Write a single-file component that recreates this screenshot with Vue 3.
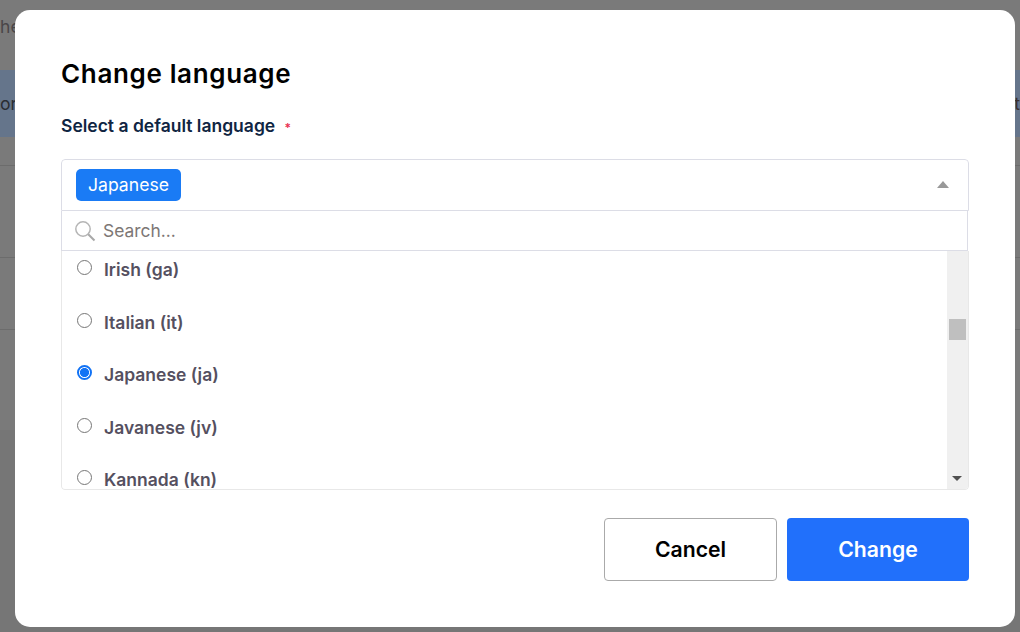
<script setup>
const options = [
  { label: 'Irish (ga)', checked: false },
  { label: 'Italian (it)', checked: false },
  { label: 'Japanese (ja)', checked: true },
  { label: 'Javanese (jv)', checked: false },
  { label: 'Kannada (kn)', checked: false },
]
</script>

<template>
  <div class="page">
    <div class="back">
      <div class="b-top"><span>he</span></div>
      <div class="b-band"><span>or</span><span class="b-end">t</span></div>
      <div class="b-gap"></div>
      <div class="b-row r1"></div>
      <div class="b-row r2"></div>
      <div class="b-row r3"></div>
    </div>
    <div class="modal">
      <h2 class="title">Change language</h2>
      <div class="label">Select a default language <span class="req">*</span></div>
      <div class="select">
        <div class="head">
          <span class="tag">Japanese</span>
          <span class="up"></span>
        </div>
        <div class="search">
          <svg class="mag" width="22" height="22" viewBox="0 0 22 22" fill="none">
            <circle cx="9" cy="9" r="7.2" stroke="#b5b5b5" stroke-width="1.5" />
            <path d="M14.2 14.2 20.5 20.5" stroke="#a8a8a8" stroke-width="2" />
          </svg>
          <span class="ph">Search...</span>
        </div>
        <div class="listwrap">
          <div class="list">
            <div v-for="o in options" :key="o.label" class="opt">
              <span class="radio" :class="{ on: o.checked }"></span>
              <span class="optlabel">{{ o.label }}</span>
            </div>
          </div>
          <div class="bar">
            <div class="thumb"></div>
            <div class="down"></div>
          </div>
        </div>
      </div>
      <div class="actions">
        <button class="btn cancel">Cancel</button>
        <button class="btn change">Change</button>
      </div>
    </div>
  </div>
</template>

<style>
html, body { margin: 0; background: #7a7a7a; overflow: hidden; }
</style>

<style scoped>
.page {
  position: relative;
  width: 1020px;
  height: 632px;
  overflow: hidden;
  background: #767676;
  font-family: Inter, "Liberation Sans", sans-serif;
}
.back { display: flex; flex-direction: column; height: 100%; }
.b-top { height: 70px; background: #7a7a7a; color: #4a4648; font-size: 17.6px; padding-top: 16px; box-sizing: border-box; }
.b-band { height: 67px; background: #65758b; color: #2a2d33; font-size: 17.6px; display: flex; justify-content: space-between; align-items: center; }
.b-end { color: #3a2f2c; }
.b-gap { height: 28px; background: #7a7a7a; }
.b-row { border-top: 1px solid #6c6c6c; background: #7a7a7a; box-sizing: border-box; }
.r1 { height: 92px; }
.r2 { height: 72px; }
.r3 { height: 101px; }
.modal {
  position: absolute;
  left: 15px;
  top: 10px;
  width: 1000px;
  height: 617px;
  background: #fff;
  border-radius: 15px;
  padding: 46px 46px 0;
  box-sizing: border-box;
}
.title {
  margin: 0;
  font-size: 26px;
  line-height: 36px;
  font-weight: 600;
  color: #000;
  letter-spacing: 0.65px;
}
.label {
  margin-top: 22px;
  font-size: 17.5px;
  line-height: 24px;
  font-weight: 600;
  color: #0f2542;
}
.req { color: #e8304f; font-size: 12px; margin-left: 5px; }
.select {
  margin-top: 19px;
  width: 908px;
  height: 331px;
  border-radius: 4px;
  display: flex;
  flex-direction: column;
  overflow: hidden;
}
.head {
  height: 50px;
  flex: none;
  display: flex;
  align-items: center;
  justify-content: space-between;
  padding: 0 19px 0 14px;
  border: 1px solid #dcdde6;
  border-radius: 4px 4px 0 0;
}
.tag {
  background: #1a7bf5;
  color: #fff;
  font-size: 17.6px;
  line-height: 32px;
  height: 32px;
  padding: 0 12px;
  border-radius: 5px;
}
.up {
  width: 0;
  height: 0;
  margin-bottom: 2px;
  border-left: 6px solid transparent;
  border-right: 6px solid transparent;
  border-bottom: 7px solid #999;
}
.search {
  height: 39px;
  flex: none;
  display: flex;
  align-items: center;
  border-left: 1px solid #dcdde6;
  border-bottom: 1px solid #dcdde6;
  border-right: 1px solid #dcdde6;
  margin-right: 1px;
  padding-left: 12px;
  position: relative;
}
.mag { margin-right: 7px; margin-top: 1px; }
.ph { color: #7d7775; font-size: 17.4px; }
.listwrap {
  flex: 1;
  min-height: 0;
  display: flex;
  border: 1px solid #e8e8e8;
  border-top: none;
  border-radius: 0 0 4px 4px;
  overflow: hidden;
}
.list { flex: 1; overflow: hidden; }
.opt {
  height: 52.5px;
  display: flex;
  align-items: flex-start;
  padding-left: 15px;
  box-sizing: border-box;
}
.radio {
  width: 15px;
  height: 15px;
  border: 1px solid #767676;
  border-radius: 50%;
  box-sizing: border-box;
  margin-top: 9px;
  flex: none;
}
.radio.on {
  border: 2px solid #1273f5;
  background: radial-gradient(circle, #1273f5 0 4.2px, #fff 4.9px);
}
.optlabel {
  margin-left: 12px;
  margin-top: 7px;
  font-size: 17.5px;
  line-height: 24px;
  font-weight: 600;
  color: #55505f;
}
.bar {
  width: 21px;
  flex: none;
  background: #f0f0f0;
  position: relative;
}
.thumb {
  position: absolute;
  top: 68px;
  left: 2px;
  width: 17px;
  height: 21px;
  background: #bfbfbf;
}
.down {
  position: absolute;
  bottom: 8px;
  left: 5px;
  width: 0;
  height: 0;
  border-left: 5px solid transparent;
  border-right: 5px solid transparent;
  border-top: 5px solid #505050;
}
.actions {
  margin-top: 28px;
  width: 908px;
  display: flex;
  justify-content: flex-end;
  gap: 10px;
}
.btn {
  height: 63px;
  border-radius: 4px;
  font-family: Inter, "Liberation Sans", sans-serif;
  font-size: 21.2px;
  font-weight: 600;
  box-sizing: border-box;
  padding: 0 0 2px;
}
.cancel { width: 173px; background: #fff; border: 1px solid #aaa; color: #000; }
.change { width: 182px; background: #2170fb; border: none; color: #fff; }
</style>
